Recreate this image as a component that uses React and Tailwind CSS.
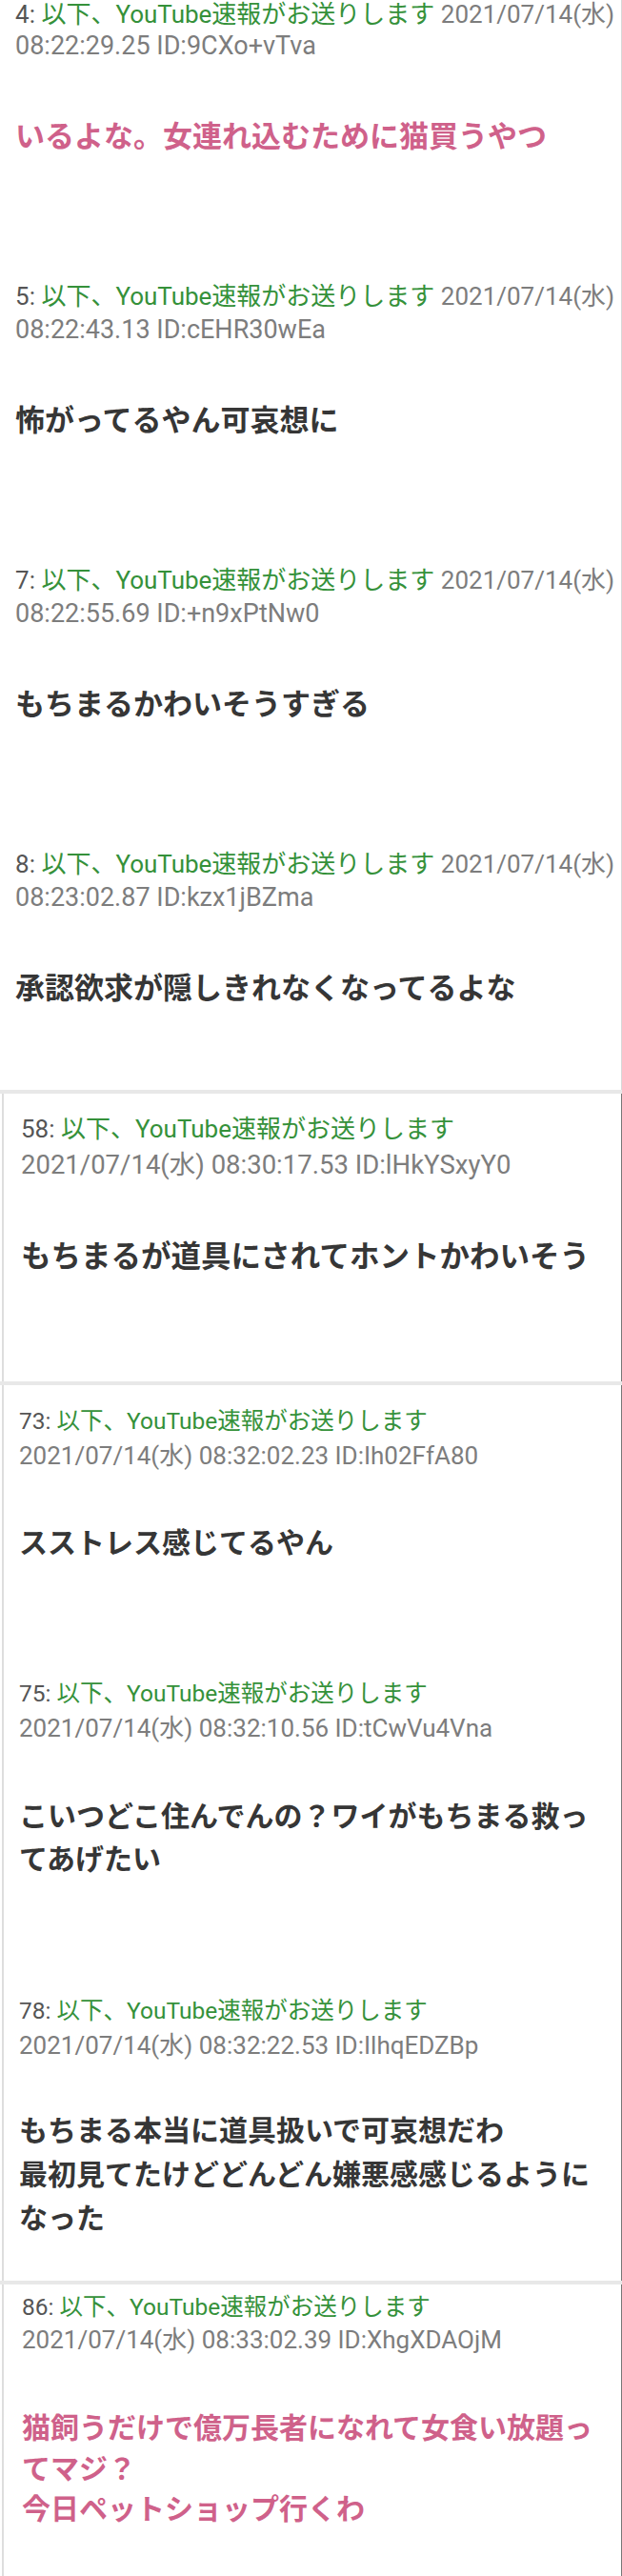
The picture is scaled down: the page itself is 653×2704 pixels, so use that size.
import React from "react";

function Header({ num, line1Size, line2Size, lh, l1, l2, inlineDate, date, rest }) {
  return (
    <div className={`${lh} whitespace-nowrap`}>
      <div className={`${line1Size} ${l1 || ""}`}>
        <span className="text-[#555555]">{num}: </span>
        <span className="text-[#35913a]">以下、YouTube速報がお送りします</span>
        {inlineDate ? <span className="text-[#7d7d7d]"> {date}</span> : null}
      </div>
      <div className={`${line2Size} ${l2 || ""} text-[#7d7d7d]`}>{inlineDate ? rest : `${date} ${rest}`}</div>
    </div>
  );
}

function Body({ lines, cls }) {
  return (
    <div className={`font-bold whitespace-nowrap ${cls}`}>
      {lines.map((l, i) => (
        <div key={i}>{l}</div>
      ))}
    </div>
  );
}

const top = [
  { num: 4, date: "2021/07/14(水)", rest: "08:22:29.25 ID:9CXo+vTva", body: ["いるよな。女連れ込むために猫買うやつ"], pink: true },
  { num: 5, date: "2021/07/14(水)", rest: "08:22:43.13 ID:cEHR30wEa", body: ["怖がってるやん可哀想に"] },
  { num: 7, date: "2021/07/14(水)", rest: "08:22:55.69 ID:+n9xPtNw0", body: ["もちまるかわいそうすぎる"] },
  { num: 8, date: "2021/07/14(水)", rest: "08:23:02.87 ID:kzx1jBZma", body: ["承認欲求が隠しきれなくなってるよな"] },
];

export default function App() {
  return (
    <div className="w-[653px] min-h-[2704px] bg-white font-['Roboto','Noto_Sans_CJK_JP',sans-serif] overflow-hidden">
      {/* first section */}
      <div className="border-r border-[#d8d8d8]">
        <div className="pl-[16px]">
          {top.map((p, i) => (
            <div key={p.num} className={i === top.length - 1 ? "pb-[84px]" : "pb-[128px]"}>
              <Header
                num={p.num}
                line1Size="text-[26px]"
                line2Size="text-[27px]"
                lh="leading-[35px]"
                l1={i === 0 ? "leading-[31px]" : ""}
                l2={i === 0 ? "leading-[35px]" : ""}
                inlineDate
                date={p.date}
                rest={p.rest}
              />
              <Body
                lines={p.body}
                cls={`mt-[56px] text-[31px] leading-[44px] ${p.pink ? "text-[#cf618a]" : "text-[#363636]"}`}
              />
            </div>
          ))}
        </div>
      </div>

      {/* box 58 */}
      <div className="border-t-4 border-[#e8e8e8]">
        <div className="ml-[2px] border-l-2 border-r border-l-[#dedede] border-r-[#777777] pl-[18px] pt-[18px] pb-[108px]">
          <Header
            num={58}
            line1Size="text-[26px]"
            line2Size="text-[27.5px]"
            lh="leading-[38px]"
            date="2021/07/14(水)"
            rest="08:30:17.53 ID:lHkYSxyY0"
          />
          <Body lines={["もちまるが道具にされてホントかわいそう"]} cls="mt-[56px] text-[31.5px] leading-[44px] text-[#363636]" />
        </div>
      </div>

      {/* box 73/75/78 */}
      <div className="border-t-4 border-[#e8e8e8]">
        <div className="ml-[2px] border-l-2 border-r border-l-[#dedede] border-r-[#777777] pl-[16px] pt-[20px] pb-[42px]">
          <div className="pb-[118px]">
            <Header
              num={73}
              line1Size="text-[24.5px]"
              line2Size="text-[26px]"
              lh="leading-[36px]"
              date="2021/07/14(水)"
              rest="08:32:02.23 ID:Ih02FfA80"
            />
            <Body lines={["スストレス感じてるやん"]} cls="mt-[52px] text-[30px] leading-[44px] text-[#363636]" />
          </div>
          <div className="pb-[119px]">
            <Header
              num={75}
              line1Size="text-[24.5px]"
              line2Size="text-[26px]"
              lh="leading-[36px]"
              date="2021/07/14(水)"
              rest="08:32:10.56 ID:tCwVu4Vna"
            />
            <Body
              lines={["こいつどこ住んでんの？ワイがもちまる救っ", "てあげたい"]}
              cls="mt-[52px] text-[30px] leading-[45px] text-[#363636]"
            />
          </div>
          <div>
            <Header
              num={78}
              line1Size="text-[24.5px]"
              line2Size="text-[26px]"
              lh="leading-[36px]"
              date="2021/07/14(水)"
              rest="08:32:22.53 ID:IlhqEDZBp"
            />
            <Body
              lines={["もちまる本当に道具扱いで可哀想だわ", "最初見てたけどどんどん嫌悪感感じるように", "なった"]}
              cls="mt-[49px] text-[30px] leading-[46px] text-[#363636]"
            />
          </div>
        </div>
      </div>

      {/* box 86 */}
      <div className="border-t-4 border-[#e8e8e8]">
        <div className="ml-[2px] border-l-2 border-r border-l-[#dedede] border-r-[#777777] pl-[19px] pt-[6px] pb-[60px]">
          <Header
            num={86}
            line1Size="text-[24.5px]"
            line2Size="text-[26px]"
            lh="leading-[35px]"
            date="2021/07/14(水)"
            rest="08:33:02.39 ID:XhgXDAOjM"
          />
          <Body
            lines={["猫飼うだけで億万長者になれて女食い放題っ", "てマジ？", "今日ペットショップ行くわ"]}
            cls="mt-[54px] text-[30px] leading-[42.5px] text-[#cf618a]"
          />
        </div>
      </div>
    </div>
  );
}
